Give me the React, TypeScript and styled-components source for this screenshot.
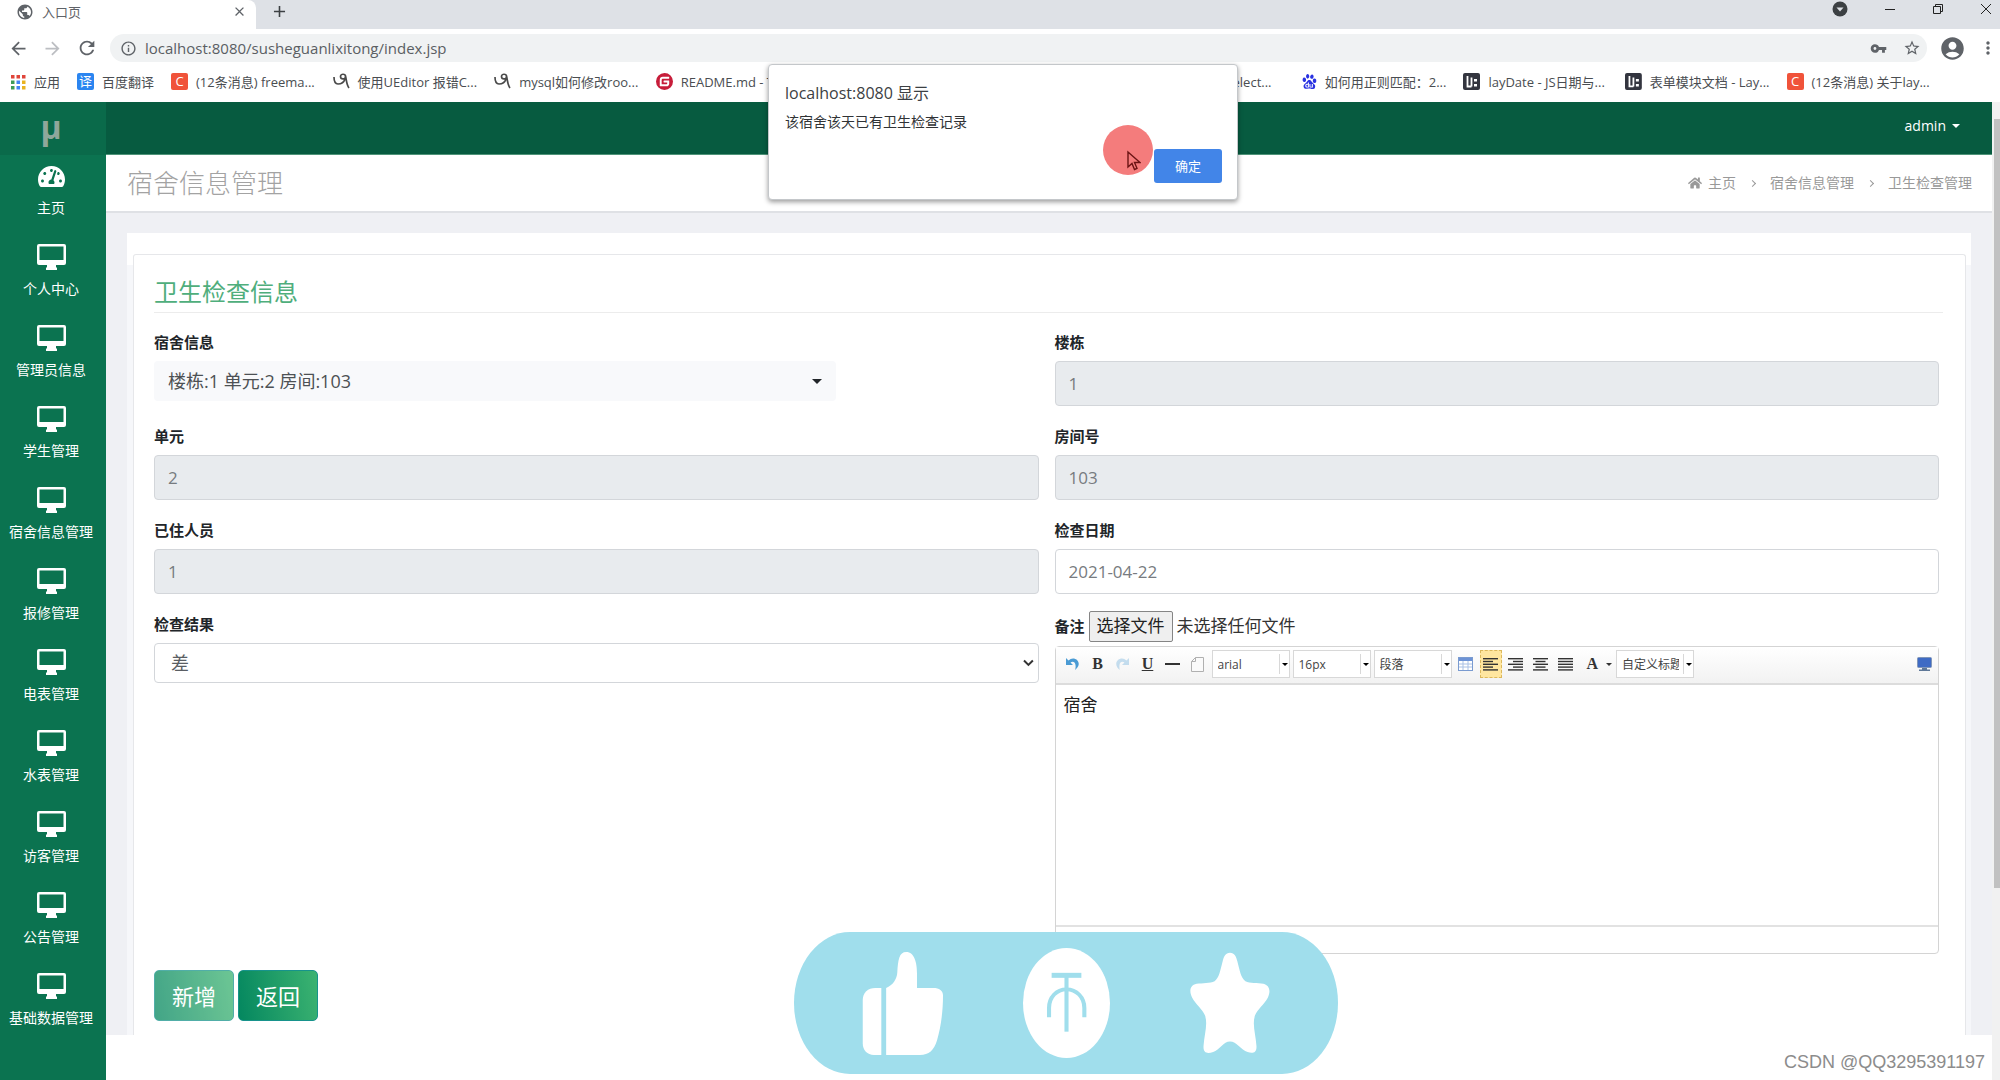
import React, { useRef } from 'react';
import styled, { createGlobalStyle, css } from 'styled-components';
import {
  MdAccountCircle,
  MdAdd,
  MdArrowBack,
  MdArrowForward,
  MdClose,
  MdInfoOutline,
  MdMoreVert,
  MdPublic,
  MdRefresh,
  MdStarBorder,
  MdVpnKey,
} from 'react-icons/md';
import { FaHome, FaTachometerAlt } from 'react-icons/fa';
import { SiBaidu, SiGitee } from 'react-icons/si';

const GlobalStyle = createGlobalStyle`
  *, *::before, *::after { box-sizing: border-box; }
  body {
    margin: 0;
    background: #fff;
    color: #333;
    font-family: 'Open Sans', 'Noto Sans CJK SC', sans-serif;
    font-size: 14px;
  }
  button, input, select, textarea { font-family: inherit; }
  ul, ol { list-style: none; margin: 0; padding: 0; }
  a { color: inherit; text-decoration: none; }
  h1, h2, p { margin: 0; font-weight: 400; }
`;

const Window = styled.div`
  position: relative;
  display: flex;
  flex-direction: column;
  min-height: 100vh;
`;

/* ---------- browser chrome ---------- */

const IconButton = styled.button<{ $tone?: string }>`
  display: flex;
  align-items: center;
  justify-content: center;
  padding: 0;
  border: 0;
  background: none;
  color: ${(p) => p.$tone || '#5f6368'};
`;

const TabStrip = styled.div`
  display: flex;
  height: 29px;
  padding-right: 8px;
  background: #dee1e6;
`;

const Tab = styled.div`
  display: flex;
  align-items: center;
  gap: 8px;
  width: 256px;
  padding: 0 9px 6px 16px;
  border-radius: 0 8px 0 0;
  background: #fff;
  color: #5f6368;
  font-size: 13px;
  line-height: 18px;
`;

const TabTitle = styled.span`
  flex: 1;
`;

const NewTab = styled(IconButton)`
  margin: 0 0 6px 14px;
`;

const WindowControls = styled.div`
  display: flex;
  align-items: center;
  gap: 36px;
  margin-left: auto;
  padding-bottom: 11px;
`;

const AddressRow = styled.div`
  display: flex;
  align-items: center;
  gap: 12px;
  height: 38px;
  padding: 0 2px 0 8px;
`;

const NavButtons = styled.div`
  display: flex;
  gap: 13px;
`;

const AddressBar = styled.div`
  display: flex;
  flex: 1;
  align-items: center;
  gap: 8px;
  height: 28px;
  padding: 0 6px 0 10px;
  border-radius: 14px;
  background: #f0f2f3;
  color: #5f6368;
`;

const AddressInput = styled.input`
  flex: 1;
  min-width: 0;
  padding: 0;
  border: 0;
  background: none;
  color: #5a5e63;
  font-size: 15px;
  line-height: 20px;
`;

const AddressActions = styled.div`
  display: flex;
  gap: 16px;
`;

const Bookmarks = styled.nav`
  display: flex;
  align-items: center;
  height: 35px;
  padding: 0 52px 6px 10px;
  color: #4a4d51;
  font-size: 13px;
  line-height: 18px;
`;

const BookmarkLink = styled.a`
  display: flex;
  align-items: center;
  gap: 8px;
  padding-right: 17px;
  white-space: nowrap;
`;

const BookmarkList = styled.ul`
  display: flex;
  flex: 1;
`;

const BookmarkItem = styled.li`
  flex: 1 1 0;
  min-width: 0;
`;

const SiteBadge = styled.span<{ $bg: string }>`
  display: flex;
  flex: none;
  align-items: center;
  justify-content: center;
  width: 17px;
  height: 17px;
  border-radius: 2px;
  background: ${(p) => p.$bg};
  color: #fff;
  font-size: 13px;
  line-height: 17px;
`;

/* ---------- application shell ---------- */

const Shell = styled.div`
  display: flex;
  flex: 1;
`;

const Sidebar = styled.nav`
  width: 106px;
  background: #0b7350;
`;

const Logo = styled.a`
  display: flex;
  align-items: center;
  justify-content: center;
  height: 53px;
  padding: 0 4px 4px 0;
  background: #0a6a4a;
  color: #8fa79b;
  font-size: 32px;
  font-weight: 700;
  line-height: 40px;
`;

const SideLink = styled.a`
  display: flex;
  flex-direction: column;
  align-items: center;
  gap: 9px;
  height: 81px;
  padding: 8px 4px 0 0;
  color: #fff;
  font-size: 14px;
  line-height: 20px;
  white-space: nowrap;
`;

const SideIcon = styled.span`
  display: flex;
  align-items: center;
  height: 26px;
`;

const Main = styled.main`
  flex: 1;
  min-width: 0;
`;

const TopBar = styled.header`
  display: flex;
  align-items: center;
  justify-content: flex-end;
  height: 53px;
  padding: 0 32px 5px;
  border-bottom: 1px solid #4f9479;
  background: #075b40;
`;

const UserMenu = styled.button`
  display: flex;
  align-items: center;
  gap: 6px;
  padding: 0;
  border: 0;
  background: none;
  color: #fff;
  font-size: 14px;
  line-height: 20px;
`;

const Caret = styled.span<{ $size?: number }>`
  flex: none;
  border: ${(p) => p.$size || 4}px solid transparent;
  border-top-color: currentColor;
  border-bottom: 0;
`;

const TitleBar = styled.div`
  display: flex;
  align-items: center;
  justify-content: space-between;
  height: 58px;
  padding: 0 20px 0 21px;
  border-bottom: 2px solid #dfe1e5;
`;

const PageTitle = styled.h1`
  color: #a3a3a3;
  font-size: 26px;
  font-weight: 300;
  line-height: 36px;
`;

const Crumbs = styled.ol`
  display: flex;
  align-items: center;
  color: #999;
  font-size: 14px;
  line-height: 20px;

  li { display: flex; align-items: center; gap: 6px; }
  li + li::before {
    content: '';
    width: 5px;
    height: 5px;
    margin: 0 9px 0 14px;
    border: solid #999;
    border-width: 1px 1px 0 0;
    transform: rotate(45deg);
  }
`;

const Canvas = styled.div`
  padding: 20px 21px 0;
  background: #eff0f4;
`;

const Panel = styled.div`
  padding: 21px 5px 0 6px;
  background: linear-gradient(#fff 0, #fff 32px, #f6f7fa 32px);
`;

const Card = styled.section`
  padding: 19px 22px 14px 20px;
  border: 1px solid #e6e7ea;
  border-bottom: 0;
  border-radius: 3px 3px 0 0;
  background: #fff;
`;

const CardTitle = styled.h2`
  margin-bottom: 20px;
  padding-bottom: 2px;
  border-bottom: 1px solid #ececec;
  color: #4fae7c;
  font-size: 24px;
  line-height: 36px;
`;

const Form = styled.form`
  padding-right: 4px;
`;

const Columns = styled.div`
  display: grid;
  grid-template-columns: 1fr 1fr;
  gap: 16px;
`;

const Column = styled.div`
  display: flex;
  flex-direction: column;
  gap: 21px;
  min-width: 0;
`;

const Field = styled.div`
  display: flex;
  flex-direction: column;
  gap: 10px;
  min-height: 73px;
`;

const Label = styled.label`
  color: #212529;
  font-size: 15px;
  font-weight: 700;
  line-height: 18px;
`;

const TextInput = styled.input`
  width: 100%;
  height: 45px;
  padding: 0 13px;
  border: 1px solid #d3d6da;
  border-radius: 4px;
  background: #fff;
  color: #777b80;
  font-size: 17px;
  line-height: 24px;

  &:read-only { background: #e8ebee; }
`;

const selectBase = css`
  appearance: none;
  width: 100%;
  height: 40px;
  font-size: 18px;
`;

const PickerWrap = styled.div`
  display: flex;
  align-items: center;
  width: 682px;
  max-width: 100%;
  padding-right: 14px;
  border-radius: 4px;
  background: #f8f9fb;
  color: #212529;
`;

const Picker = styled.select`
  ${selectBase}
  padding: 0 14px;
  border: 0;
  background: none;
  color: #4d5154;
`;

const SelectWrap = styled.div`
  display: flex;
  align-items: center;
  padding-right: 4px;
  border: 1px solid #d3d6da;
  border-radius: 4px;
  background: #fff;
`;

const PlainSelect = styled.select`
  ${selectBase}
  height: 38px;
  padding: 0 16px;
  border: 0;
  background: none;
  color: #5a5e63;
`;

const FileRow = styled.div`
  display: flex;
  align-items: center;
  gap: 4px;
  height: 22px;
  color: #333;
  font-size: 17px;
  line-height: 24px;
`;

const FileButton = styled.button`
  height: 31px;
  padding: 0 7px;
  border: 1px solid #858585;
  border-radius: 2px;
  background: #efefef;
  color: #222;
  font-size: 17px;
  line-height: 24px;
`;

const RemarkField = styled.div`
  display: flex;
  flex-direction: column;
  gap: 9px;
`;

const Editor = styled.div`
  border: 1px solid #d4d4d4;
  border-radius: 4px;
  background: #fff;
`;

const EditorToolbar = styled.div`
  display: flex;
  align-items: center;
  gap: 3px;
  height: 38px;
  padding: 0 3px 2px 6px;
  border-bottom: 2px solid #dcdcdc;
  background: linear-gradient(#fff, #f2f2f2);
`;

const Tool = styled.button<{ $active?: boolean; $faded?: boolean }>`
  display: flex;
  align-items: center;
  justify-content: center;
  gap: 8px;
  min-width: 22px;
  height: 28px;
  padding: 0;
  border: 1px ${(p) => (p.$active ? 'dashed #dcb85c' : 'solid transparent')};
  background: ${(p) => (p.$active ? '#ffe69f' : 'none')};
  color: #333;
  font: 700 16px/20px 'Liberation Serif', serif;
  opacity: ${(p) => (p.$faded ? 0.3 : 1)};
`;

const ToolGroup = styled.div`
  display: flex;
  align-items: center;
  gap: 3px;
  padding-left: 6px;
`;

const Combo = styled.div`
  display: flex;
  align-items: center;
  width: 78px;
  height: 28px;
  padding-right: 1px;
  border: 1px solid #d8d8d8;
  background: #fff;
  color: #000;
`;

const ComboSelect = styled.select`
  appearance: none;
  flex: 1;
  min-width: 0;
  height: 20px;
  margin-right: 2px;
  padding: 0 4px 0 5px;
  border: 0;
  border-right: 1px solid #d8d8d8;
  background: none;
  color: #444;
  font-size: 12px;
`;

const Spacer = styled.span`
  flex: 1;
`;

const EditorBody = styled.textarea`
  display: block;
  width: 100%;
  height: 242px;
  padding: 8px;
  border: 0;
  border-bottom: 2px solid #e2e2e2;
  background: none;
  color: #222;
  font-size: 17px;
  line-height: 24px;
  resize: none;
`;

const EditorStatus = styled.div`
  height: 26px;
`;

const Actions = styled.div`
  display: flex;
  gap: 4px;
  margin-top: 16px;
`;

const ActionButton = styled.button<{ $dim?: boolean }>`
  height: 51px;
  padding: 0 17px;
  border: 1px solid #17938c;
  border-radius: 5px;
  background: linear-gradient(80deg, #04875f, #3cb371);
  color: #fff;
  font-size: 22px;
  line-height: 30px;
  opacity: ${(p) => (p.$dim ? 0.75 : 1)};
`;

const ScrollTrack = styled.div`
  width: 8px;
  padding: 17px 0 0 2px;
  background: #f1f1f1;
`;

const ScrollThumb = styled.div`
  height: 80%;
  background: #c1c1c1;
`;

/* ---------- overlays ---------- */

const Dialog = styled.div`
  position: absolute;
  top: 64px;
  left: calc(50% - 232px);
  display: flex;
  flex-direction: column;
  width: 470px;
  height: 136px;
  padding: 17px 15px 16px 16px;
  border: 1px solid #c4c7ca;
  border-radius: 4px;
  background: #fff;
  box-shadow: 0 2px 5px rgba(0, 0, 0, 0.4);
`;

const DialogTitle = styled.h2`
  color: #3c4043;
  font-size: 16px;
  line-height: 22px;
`;

const DialogText = styled.p`
  margin-top: 8px;
  color: #303336;
  font-size: 14px;
  line-height: 20px;
`;

const DialogButton = styled.button`
  align-self: flex-end;
  width: 68px;
  height: 34px;
  margin-top: auto;
  padding: 0;
  border: 0;
  border-radius: 3px;
  background: #4285e8;
  color: #fff;
  font-size: 13px;
  line-height: 18px;
`;

const ClickHalo = styled.div`
  position: absolute;
  top: 60px;
  left: 334px;
  width: 50px;
  height: 50px;
  border-radius: 50%;
  background: #f47c7c;

  svg { position: absolute; top: 25px; left: 24px; }
`;

const ReactionBar = styled.div`
  position: absolute;
  bottom: 6px;
  left: calc(50% - 206px);
  display: flex;
  align-items: center;
  justify-content: space-between;
  width: 544px;
  height: 142px;
  padding: 0 68px;
  border-radius: 56px / 71px;
  background: #a0deec;
`;

const Watermark = styled.span`
  position: absolute;
  right: 15px;
  bottom: 6px;
  color: #8c8c8c;
  font: 18px/24px 'Liberation Sans', sans-serif;
`;

/* ---------- drawings ---------- */

const MonitorIcon = () => (
  <svg width="29" height="26" viewBox="0 0 29 26" fill="#fff">
    <path
      fillRule="evenodd"
      d="M2 0h25a2 2 0 0 1 2 2v17a2 2 0 0 1-2 2h-8v2l1 1v2H9v-2l1-1v-2H2a2 2 0 0 1-2-2V2a2 2 0 0 1 2-2zm.5 2.5v13.500h24V2.500z"
    />
  </svg>
);

const AppsIcon = () => {
  const tones = ['#e0453a', '#e0453a', '#e0453a', '#3e9b57', '#4285f4', '#e9b320', '#3e9b57', '#4285f4', '#e9b320'];
  return (
    <svg width="16" height="16" viewBox="0 0 16 16">
      {tones.map((tone, i) => (
        <rect key={i} x={1 + (i % 3) * 5.500} y={1 + Math.floor(i / 3) * 5.500} width="3.500" height="3.500" fill={tone} />
      ))}
    </svg>
  );
};

const SwirlIcon = () => (
  <svg width="17" height="17" viewBox="0 0 17 17" fill="none" stroke="#4a4a4a" strokeWidth="1.700">
    <path d="M1 4c0 5 1 7 4 7s6-2 7-5M12.500 3.500c0-3-5-3-5 0s5 3.500 5 0zM12.500 3c1 4 1 9 3.500 12" />
  </svg>
);

const LayIcon = () => (
  <svg width="17" height="17" viewBox="0 0 17 17">
    <rect width="17" height="17" rx="2" fill="#33353f" />
    <path d="M4.500 3v10.500h4M8.500 4.500v9" fill="none" stroke="#fff" strokeWidth="1.800" />
    <path d="M11 6h3v2.500h-3zM11 11h3v2.500h-3z" fill="#fff" />
  </svg>
);

const Chevron = () => (
  <svg width="11" height="8" viewBox="0 0 11 8" fill="none" stroke="#333" strokeWidth="2">
    <path d="M1 1.500l4.500 4.500L10 1.500" />
  </svg>
);

const PointerIcon = () => (
  <svg width="14" height="22" viewBox="0 0 14 22" fill="none" stroke="#6b1414" strokeWidth="1.400">
    <path d="M1 2v15l4-3.500 2.500 6 2.500-1.200L7.500 12.500H13z" />
  </svg>
);

const UndoIcon = ({ flip }: { flip?: boolean }) => (
  <svg width="15" height="14" viewBox="0 0 15 14">
    <path
      d={flip
        ? 'M14 1v7H7l2.500-2.500C7 4 5 5 4.500 8c-.3 2 0 4 .5 5C1 10 0 6 3 3c2.500-2.200 6-2 8.500.5z'
        : 'M1 1v7h7L5.500 5.500C8 4 10 5 10.500 8c.3 2 0 4-.5 5 4-3 5-7 2-10C9.500.8 6 1 3.500 3.500z'}
      fill="#4a9bd4"
    />
  </svg>
);

const PageIcon = () => (
  <svg width="13" height="15" viewBox="0 0 13 15" fill="#fafafa" stroke="#b0b0b0">
    <path d="M.5 4.500l4-4h8v14H.5zM4.500.5v4h-4" />
  </svg>
);

const TableIcon = () => (
  <svg width="15" height="14" viewBox="0 0 15 14">
    <rect x=".5" y=".5" width="14" height="13" fill="#fff" stroke="#7a9bd0" />
    <rect x="1" y="1" width="13" height="3" fill="#6d93d6" />
    <path d="M5 4v9M10 4v9M1 7h13M1 10h13" stroke="#a9c0e4" />
  </svg>
);

type AlignKind = 'left' | 'right' | 'center' | 'justify';

const AlignIcon = ({ kind }: { kind: AlignKind }) => (
  <svg width="15" height="13" viewBox="0 0 15 13" fill="#333">
    {[0, 1, 2, 3, 4].map((row) => {
      const width = kind === 'justify' || row % 2 === 0 ? 15 : 10;
      const x = kind === 'right' ? 15 - width : kind === 'center' ? (15 - width) / 2 : 0;
      return <rect key={row} x={x} y={row * 2.800} width={width} height="1.400" />;
    })}
  </svg>
);

const ScreenIcon = () => (
  <svg width="15" height="14" viewBox="0 0 15 14">
    <rect x=".5" y=".5" width="14" height="10" rx="1" fill="#3f6bc4" stroke="#8297b8" />
    <path d="M5 11h5v1.500H5zM2 12.500h11V14H2z" fill="#5f7898" />
  </svg>
);

const ThumbIcon = () => (
  <svg width="81" height="103" viewBox="222 155 218 307" preserveAspectRatio="none" fill="#fff">
    <path d="M274 262v200h-20c-18 0-30-14-30-34V298c0-22 14-36 34-36z" />
    <path d="M287 262c18-8 29-26 30-46 2-38 5-61 24-61 22 0 29 32 29 63v44h44c16 0 26 8 26 22 0 50-6 96-16 134-8 30-22 44-46 44h-91z" />
  </svg>
);

const CoinIcon = () => (
  <svg width="87" height="110" viewBox="656 144 234 330" preserveAspectRatio="none" fill="none" stroke="#a0deec">
    <ellipse cx="773" cy="309" rx="117" ry="165" fill="#fff" stroke="none" />
    <path d="M733 226h80" strokeWidth="15" />
    <path d="M773 230v165" strokeWidth="11" />
    <path d="M726 352v-28c0-32 20-56 47-56s48 24 48 56v28" strokeWidth="11" />
  </svg>
);

const StarIcon = () => (
  <svg width="80" height="102" viewBox="1106 158 218 308" preserveAspectRatio="none" fill="#fff">
    <path d="M1215 160c-12 0-17 12-20 26-6 26-10 52-22 60-12 7-33 5-49 8-20 5-20 24-12 42 10 21 28 34 35 54 8 26-2 58-4 90-2 24 10 26 26 20 18-7 28-32 46-32s30 25 48 32c14 6 26 2 24-20-2-32-12-64-4-90 7-20 25-33 35-54 8-18 6-37-12-42-16-4-37-1-49-8-12-8-16-34-22-60-3-14-8-26-20-26z" />
  </svg>
);

/* ---------- data ---------- */

const csdn = <SiteBadge $bg="#f0533a">C</SiteBadge>;

const bookmarks: { icon: React.ReactNode; text: string }[] = [
  { icon: csdn, text: '(12条消息) freema...' },
  { icon: <SwirlIcon />, text: '使用UEditor 报错C...' },
  { icon: <SwirlIcon />, text: 'mysql如何修改roo...' },
  { icon: <SiGitee size={17} color="#c71d3a" />, text: 'README.md - T' },
  { icon: null, text: '' },
  { icon: null, text: '' },
  { icon: csdn, text: 'layui 中的 select...' },
  { icon: <SiBaidu size={17} color="#2932e1" />, text: '如何用正则匹配：2...' },
  { icon: <LayIcon />, text: 'layDate - JS日期与...' },
  { icon: <LayIcon />, text: '表单模块文档 - Lay...' },
  { icon: csdn, text: '(12条消息) 关于lay...' },
];

const menu = [
  '个人中心', '管理员信息', '学生管理', '宿舍信息管理', '报修管理',
  '电表管理', '水表管理', '访客管理', '公告管理', '基础数据管理',
];

interface InputFieldProps {
  id: string;
  label: string;
  value: string;
  readOnly?: boolean;
}

const InputField = ({ id, label, value, readOnly }: InputFieldProps) => (
  <Field>
    <Label htmlFor={id}>{label}</Label>
    <TextInput id={id} defaultValue={value} readOnly={readOnly} />
  </Field>
);

const ToolCombo = ({ name, value }: { name: string; value: string }) => (
  <Combo>
    <ComboSelect aria-label={name}>
      <option>{value}</option>
    </ComboSelect>
    <Caret $size={3} />
  </Combo>
);

const BrowserChrome = () => (
  <>
    <TabStrip>
      <Tab>
        <MdPublic size={18} />
        <TabTitle>入口页</TabTitle>
        <IconButton aria-label="关闭标签页"><MdClose size={15} /></IconButton>
      </Tab>
      <NewTab aria-label="新标签页" $tone="#3c4043"><MdAdd size={19} /></NewTab>
      <WindowControls>
        <IconButton aria-label="搜索标签页">
          <svg width="16" height="16" viewBox="0 0 16 16">
            <circle cx="8" cy="8" r="7.500" fill="#3c4043" />
            <path d="M4.500 6.500h7L8 10.500z" fill="#dee1e6" />
          </svg>
        </IconButton>
        <IconButton aria-label="最小化">
          <svg width="12" height="12" stroke="#222"><path d="M1 6.500h10" /></svg>
        </IconButton>
        <IconButton aria-label="还原">
          <svg width="12" height="12" fill="none" stroke="#222"><path d="M1.500 3.500h7v7h-7zM3.500 3V1.500h7v7H9" /></svg>
        </IconButton>
        <IconButton aria-label="关闭">
          <svg width="12" height="12" stroke="#222"><path d="M1 1l10 10M11 1L1 11" /></svg>
        </IconButton>
      </WindowControls>
    </TabStrip>
    <AddressRow>
      <NavButtons>
        <IconButton aria-label="后退"><MdArrowBack size={21} /></IconButton>
        <IconButton aria-label="前进" $tone="#bcbec2"><MdArrowForward size={21} /></IconButton>
        <IconButton aria-label="刷新"><MdRefresh size={22} /></IconButton>
      </NavButtons>
      <AddressBar>
        <MdInfoOutline size={17} />
        <AddressInput aria-label="地址" defaultValue="localhost:8080/susheguanlixitong/index.jsp" />
        <AddressActions>
          <IconButton aria-label="密码"><MdVpnKey size={17} /></IconButton>
          <IconButton aria-label="收藏"><MdStarBorder size={18} /></IconButton>
        </AddressActions>
      </AddressBar>
      <IconButton aria-label="用户"><MdAccountCircle size={27} /></IconButton>
      <IconButton aria-label="菜单"><MdMoreVert size={20} /></IconButton>
    </AddressRow>
    <Bookmarks>
      <BookmarkLink href="#"><AppsIcon />应用</BookmarkLink>
      <BookmarkLink href="#"><SiteBadge $bg="#2b85f0">译</SiteBadge>百度翻译</BookmarkLink>
      <BookmarkList>
        {bookmarks.map((b, i) => (
          <BookmarkItem key={i}>
            {b.text && <BookmarkLink href="#">{b.icon}{b.text}</BookmarkLink>}
          </BookmarkItem>
        ))}
      </BookmarkList>
    </Bookmarks>
  </>
);

const RemarkEditor = () => {
  const file = useRef<HTMLInputElement>(null);
  return (
    <RemarkField>
      <FileRow>
        <Label htmlFor="remark">备注</Label>
        <FileButton type="button" onClick={() => file.current?.click()}>选择文件</FileButton>
        <input ref={file} type="file" hidden aria-label="选择文件" />
        <span>未选择任何文件</span>
      </FileRow>
      <Editor>
        <EditorToolbar>
          <Tool type="button" aria-label="撤销"><UndoIcon /></Tool>
          <Tool type="button">B</Tool>
          <Tool type="button" aria-label="重做" $faded><UndoIcon flip /></Tool>
          <Tool type="button"><u>U</u></Tool>
          <Tool type="button" aria-label="分隔线">
            <svg width="15" height="2"><rect width="15" height="2" fill="#333" /></svg>
          </Tool>
          <Tool type="button" aria-label="清空文档"><PageIcon /></Tool>
          <ToolCombo name="字体" value="arial" />
          <ToolCombo name="字号" value="16px" />
          <ToolCombo name="段落格式" value="段落" />
          <Tool type="button" aria-label="表格"><TableIcon /></Tool>
          <Tool type="button" aria-label="居左对齐" $active><AlignIcon kind="left" /></Tool>
          <Tool type="button" aria-label="居右对齐"><AlignIcon kind="right" /></Tool>
          <Tool type="button" aria-label="居中对齐"><AlignIcon kind="center" /></Tool>
          <Tool type="button" aria-label="两端对齐"><AlignIcon kind="justify" /></Tool>
          <ToolGroup>
            <Tool type="button">A<Caret $size={3} /></Tool>
            <ToolCombo name="自定义标题" value="自定义标题" />
          </ToolGroup>
          <Spacer />
          <Tool type="button" aria-label="全屏"><ScreenIcon /></Tool>
        </EditorToolbar>
        <EditorBody id="remark" defaultValue="宿舍" />
        <EditorStatus />
      </Editor>
    </RemarkField>
  );
};

const InspectionForm = () => (
  <Card>
    <CardTitle>卫生检查信息</CardTitle>
    <Form onSubmit={(e) => e.preventDefault()}>
      <Columns>
        <Column>
          <Field>
            <Label htmlFor="dorm">宿舍信息</Label>
            <PickerWrap>
              <Picker id="dorm"><option>楼栋:1 单元:2 房间:103</option></Picker>
              <Caret $size={5} />
            </PickerWrap>
          </Field>
          <InputField id="unit" label="单元" value="2" readOnly />
          <InputField id="people" label="已住人员" value="1" readOnly />
          <Field>
            <Label htmlFor="result">检查结果</Label>
            <SelectWrap>
              <PlainSelect id="result"><option>差</option></PlainSelect>
              <Chevron />
            </SelectWrap>
          </Field>
        </Column>
        <Column>
          <InputField id="building" label="楼栋" value="1" readOnly />
          <InputField id="room" label="房间号" value="103" readOnly />
          <InputField id="date" label="检查日期" value="2021-04-22" />
          <RemarkEditor />
        </Column>
      </Columns>
      <Actions>
        <ActionButton $dim>新增</ActionButton>
        <ActionButton type="button">返回</ActionButton>
      </Actions>
    </Form>
  </Card>
);

export default function App() {
  return (
    <Window>
      <GlobalStyle />
      <BrowserChrome />
      <Shell>
        <Sidebar>
          <Logo href="#">μ</Logo>
          <ul>
            <li><SideLink href="#"><SideIcon><FaTachometerAlt size={27} /></SideIcon>主页</SideLink></li>
            {menu.map((name) => (
              <li key={name}><SideLink href="#"><SideIcon><MonitorIcon /></SideIcon>{name}</SideLink></li>
            ))}
          </ul>
        </Sidebar>
        <Main>
          <TopBar><UserMenu>admin<Caret /></UserMenu></TopBar>
          <TitleBar>
            <PageTitle>宿舍信息管理</PageTitle>
            <Crumbs>
              <li><FaHome size={14} /><a href="#">主页</a></li>
              <li><a href="#">宿舍信息管理</a></li>
              <li>卫生检查管理</li>
            </Crumbs>
          </TitleBar>
          <Canvas><Panel><InspectionForm /></Panel></Canvas>
        </Main>
        <ScrollTrack><ScrollThumb /></ScrollTrack>
      </Shell>
      <Dialog role="dialog" aria-labelledby="alert-title">
        <DialogTitle id="alert-title">localhost:8080 显示</DialogTitle>
        <DialogText>该宿舍该天已有卫生检查记录</DialogText>
        <DialogButton>确定</DialogButton>
        <ClickHalo><PointerIcon /></ClickHalo>
      </Dialog>
      <ReactionBar><ThumbIcon /><CoinIcon /><StarIcon /></ReactionBar>
      <Watermark>CSDN @QQ3295391197</Watermark>
    </Window>
  );
}
